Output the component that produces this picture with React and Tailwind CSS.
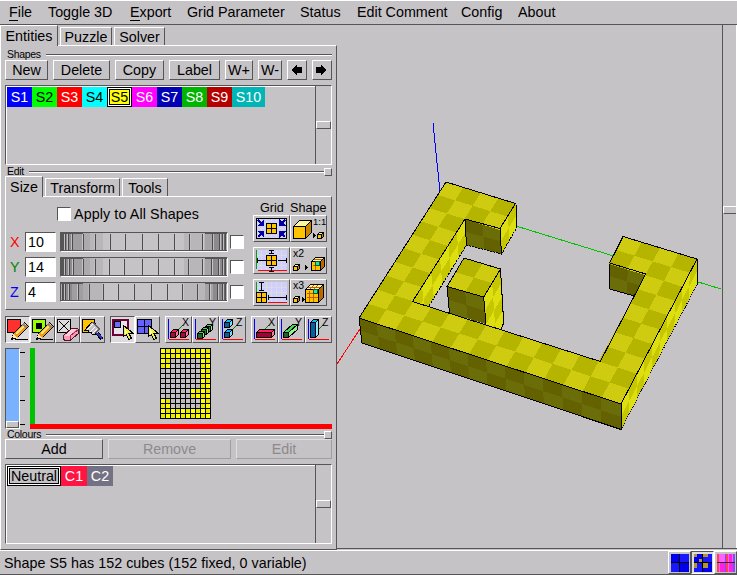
import React from "react";

const UP = "border border-t-white border-l-white border-b-[#555] border-r-[#555] bg-[#c6c3c6]";
const DOWN = "border border-t-[#555] border-l-[#555] border-b-white border-r-white";

function Btn({ w, off, children }) {
  return (
    <button
      className={`flex h-5 shrink-0 items-center justify-center border bg-[#c6c3c6] ${
        off
          ? "border-t-[#e0dfe0] border-l-[#e0dfe0] border-b-[#a09ea0] border-r-[#a09ea0] text-[#8c8a8c]"
          : "border-t-white border-l-white border-b-[#555] border-r-[#555]"
      }`}
      style={{ width: w }}
    >
      {children}
    </button>
  );
}

function Tab({ w, active, children }) {
  return (
    <div
      className={`shrink-0 border-t border-l border-r border-t-white border-l-white border-r-[#555] bg-[#c6c3c6] flex items-center justify-center ${
        active ? "relative h-[21px]" : "h-[18px] mb-px"
      }`}
      style={{ width: w }}
    >
      {children}
    </div>
  );
}

function GroupLabel({ text, knob }) {
  return (
    <div className="flex h-[9px] items-center pl-[2px] text-[10.5px] tracking-[-0.3px]">
      <span className="leading-[9px]">{text}</span>
      <div className="ml-[5px] h-[2px] grow border-t border-b border-t-[#555] border-b-white" />
      {knob && <div className={`size-2 ${UP}`} />}
    </div>
  );
}

function ListBox({ children }) {
  return (
    <div className={`flex h-20 ${DOWN}`}>
      <div className="flex grow items-start border-t border-l border-white text-white">{children}</div>
      <div className="flex w-4 items-center border-l border-[#555]">
        <div className={`h-2 w-[15px] ${UP}`} />
      </div>
    </div>
  );
}

function Chip({ w, bg, fg, sel, children }) {
  return (
    <div
      className={`flex h-5 items-center justify-center ${sel ? "border border-black" : ""}`}
      style={{ width: w, background: bg, color: fg }}
    >
      {sel ? (
        <div className="flex h-full w-full border border-white">
          <div className="flex h-full w-full items-center justify-center border border-black">{children}</div>
        </div>
      ) : (
        children
      )}
    </div>
  );
}

function Check() {
  return <div className={`size-[14px] shrink-0 bg-white ${DOWN}`} />;
}

const DIAL_A = [65, 68, 72, 83, 95, 110, 125, 142, 158, 174, 189, 202, 212, 219, 222, 225];
const DIAL_B = [65, 69, 73, 83, 95, 109, 124, 142, 158, 174, 188, 202, 211, 218, 222, 225];
const DIAL_C = [62, 65, 69, 78, 89, 103, 118, 134, 151, 167, 182, 197, 209, 217, 222, 225];

function Dial({ ticks }) {
  return (
    <div className={`h-5 w-[168px] shrink-0 ${DOWN}`}>
      <svg width="166" height="18" viewBox="61 0 166 18" shapeRendering="crispEdges">
        <rect x="61" width="166" height="18" fill="#c6c3c6" />
        <rect x="61" width="42" height="18" fill="#b8b6b8" />
        <rect x="61" width="29" height="18" fill="#adaaad" />
        <rect x="61" width="22" height="18" fill="#a09ea0" />
        <rect x="61" width="11" height="18" fill="#8c8a8c" />
        <rect x="61" width="3" height="18" fill="#555" />
        <rect x="184" width="43" height="18" fill="#b8b6b8" />
        <rect x="205" width="22" height="18" fill="#a5a3a5" />
        <rect x="213" width="14" height="18" fill="#8c8a8c" />
        <rect x="224" width="3" height="18" fill="#666" />
        {ticks.map((t) => (
          <g key={t}>
            <rect x={t} y="1" width="1" height="16" fill="#4c4c4c" />
            <rect x={t < 142 ? t - 1 : t + 1} y="1" width="1" height="16" fill="#d6d4d6" opacity={t > 83 && t < 200 ? 0.3 : 0.7} />
          </g>
        ))}
        <path d="M61 .5h22M205 .5h22" stroke="#555" />
        <path d="M61 17.5h166" stroke="#555" />
      </svg>
    </div>
  );
}

function AxisRow({ name, color, value, ticks }) {
  return (
    <div className="flex h-[25px] items-start">
      <span className="w-[15px] pt-px leading-[18px]" style={{ color }}>{name}</span>
      <div className={`mr-1 h-5 w-[31px] shrink-0 bg-white pl-[2px] leading-[18px] ${DOWN}`}>{value}</div>
      <Dial ticks={ticks} />
      <div className="ml-[2px] pt-[3px]"><Check /></div>
    </div>
  );
}

/* ---- small icons ---- */
function Cube({ x, y, s, d, f = "#ffc300", t = "#fff7a0", r = "#c68600" }) {
  return (
    <g stroke="#000" strokeWidth="1">
      <path d={`M${x} ${y}l${d} ${-d}h${s}l${-d} ${d}z`} fill={t} />
      <path d={`M${x + s} ${y}l${d} ${-d}v${s}l${-d} ${d}z`} fill={r} />
      <rect x={x} y={y} width={s} height={s} fill={f} />
    </g>
  );
}

function Four({ x, y }) {
  return (
    <g>
      <rect x={x} y={y} width="10" height="10" fill="#ffc300" stroke="#000" />
      <path d={`M${x + 5} ${y}v10M${x} ${y + 5}h10`} stroke="#000" />
    </g>
  );
}

function Lattice() {
  return (
    <g>
      <rect x="3" y="3" width="31" height="20" fill="#cfcfff" />
      <path d="M8.5 3v20M13.5 3v20M18.5 3v20M23.5 3v20M28.5 3v20M3 8.5h31M3 13.5h31M3 18.5h31" stroke="#dedbde" />
    </g>
  );
}

function IconBtn({ w, h, down, children }) {
  return (
    <button className={`shrink-0 ${down ? DOWN + " bg-[#dedbde]" : UP}`} style={{ width: w, height: h }}>
      <svg className="block" width={w - 2} height={h - 2} viewBox={`1 1 ${w - 2} ${h - 2}`} fill="none" shapeRendering="crispEdges">
        {children}
      </svg>
    </button>
  );
}

const T = ({ x, y, s = 10.5, children }) => (
  <text x={x} y={y} fontSize={s} fill="#000" fontFamily="Liberation Sans, sans-serif">{children}</text>
);

function MiniGrid({ x, y, n }) {
  const s = n * 4;
  const d = n + 2;
  return (
    <g>
      <Cube x={x} y={y} s={s + 1} d={d} r="#b57100" />
      <path d={`M${x + 4} ${y + 1}v${s - 1}M${x + 1} ${y + 4}h${s - 1}M${x + 2} ${y - 2}h${s}M${x + s + 3} ${y - 1}v${s - 1}`} stroke="#c65a00" />
      {n > 2 && <path d={`M${x + 8} ${y + 1}v${s - 1}M${x + 1} ${y + 8}h${s - 1}M${x + 8} ${y}l4 -4M${x + 4} ${y}l4 -4`} stroke="#c65a00" />}
      <rect x={x + s - 4} y={y} width="4" height="4" fill="#30dfa0" stroke="#006040" />
    </g>
  );
}

function Pencil() {
  return (
    <g>
      <path d="M10 23.5h13" stroke="#000" />
      <path d="M6.5 23.5l2-6L19.5 6.5l4 4L12.5 21.5z" fill="#ef9a18" stroke="#000" />
      <path d="M6.5 23l2-5 3.5 3.5z" fill="#ffe3b0" />
      <path d="M11 18L20.5 8.5" stroke="#ffdf70" strokeWidth="1.5" />
      <path d="M18 8l4 4" stroke="#888" strokeWidth="2" />
      <path d="M6 24l1-3 2 2z" fill="#000" />
    </g>
  );
}

function Pointer() {
  return (
    <g>
      <path d="M13.5 9.500V20.500l3-2 2 5 3-1-2.500-5h4.500z" fill="#efef42" stroke="#000" />
      <path d="M15 12v6l2-2z" fill="#ffffb0" />
    </g>
  );
}

function AxisIcon({ name, children }) {
  return (
    <IconBtn w={27} h={27}>
      <path d="M14 13l4-4" stroke="#008200" />
      {children}
      <path d="M3.5 3v20" stroke="#0000ff" />
      <path d="M4 23.5h20" stroke="#ff0000" />
      <T x={17} y={10}>{name}</T>
    </IconBtn>
  );
}

/* ---- slice grid ---- */
function filled(c, r) {
  return r < 2 || r > 11 || c > 7 || (c < 2 && (r < 4 || r > 9)) || ((c === 6 || c === 7) && (r === 8 || r === 9));
}

function Slice() {
  const cells = [];
  for (let r = 0; r < 14; r++)
    for (let c = 0; c < 10; c++)
      cells.push(
        <rect key={`${c}-${r}`} x={c * 5 + 1} y={r * 5 + 1} width="4" height="4"
          fill={!filled(c, r) ? ((c + r) % 2 ? "#c6c3c6" : "#bcb9bc") : (c + r) % 2 ? "#e7e700" : "#ffff00"} />
      );
  return (
    <svg width="51" height="71" shapeRendering="crispEdges">
      <rect width="51" height="71" fill="#000" />
      {cells}
    </svg>
  );
}

/* ---- 3D view ---- */
function projector([[x0, y0], [x1, y1], [x2, y2], [x3, y3]]) {
  const dx1 = x1 - x2, dx2 = x3 - x2, dx3 = x0 - x1 + x2 - x3;
  const dy1 = y1 - y2, dy2 = y3 - y2, dy3 = y0 - y1 + y2 - y3;
  const den = dx1 * dy2 - dx2 * dy1;
  const g = (dx3 * dy2 - dx2 * dy3) / den;
  const h = (dx1 * dy3 - dx3 * dy1) / den;
  const a = x1 - x0 + g * x1, b = x3 - x0 + h * x3;
  const d = y1 - y0 + g * y1, e = y3 - y0 + h * y3;
  return (u, v) => {
    const w = g * u + h * v + 1;
    return `${((a * u + b * v + x0) / w).toFixed(2)},${((d * u + e * v + y0) / w).toFixed(2)}`;
  };
}

function Face({ q, nu, nv, even, odd, keep }) {
  const p = projector(q);
  const out = [];
  for (let i = 0; i < nu; i++)
    for (let j = 0; j < nv; j++)
      if (!keep || keep(i, j))
        out.push(
          <polygon key={`${i}-${j}`} fill={(i + j) % 2 ? odd : even}
            points={[p(i / nu, j / nv), p((i + 1) / nu, j / nv), p((i + 1) / nu, (j + 1) / nv), p(i / nu, (j + 1) / nv)].join(" ")} />
        );
  return <g>{out}</g>;
}

const TOP = { even: "#b5b500", odd: "#cecb10" };
const FRONT = { even: "#636100", odd: "#6b6d08" };
const SIDE = { even: "#dedf10", odd: "#c6c700" };

function View3D() {
  return (
    <svg width="385" height="523" viewBox="337 25 385 523" shapeRendering="crispEdges" fill="none">
      <path d="M433 123L440 192" stroke="#0000ff" />
      <path d="M516 226L721 289" stroke="#00c300" />
      <path d="M360 329L337 364" stroke="#ff0000" />
      <Face q={[[465, 219], [412.5, 301.5], [416, 327], [466.5, 245]]} nu={6} nv={2} {...SIDE} />
      <Face q={[[465, 219], [500, 228.5], [501.5, 254], [466.5, 245]]} nu={2} nv={2} {...FRONT} />
      <Face q={[[500, 228.5], [515.5, 203.5], [516.5, 228], [501.5, 254]]} nu={2} nv={2} {...SIDE} />
      <Face q={[[609.7, 263], [645.7, 274], [645, 300], [609.7, 289]]} nu={2} nv={2} {...FRONT} />
      <path d="M609.7 289L636 296.5M609.7 263V289" stroke="#000" />
      <path d="M466.5 245L501.5 254L516.5 228M466.5 245L429 306" stroke="#000" strokeDasharray="2 1" />
      <path d="M465 219L466.5 245M500 228.5L501.5 254M516 204L516.5 228" stroke="#000" />
      <Face q={[[447, 286.5], [483.7, 297], [486, 324], [449.5, 313]]} nu={2} nv={2} {...FRONT} />
      <Face q={[[483.7, 297], [500.5, 269], [503.7, 323], [488, 350]]} nu={2} nv={4} {...SIDE} />
      <Face q={[[447, 286.5], [483.7, 297], [500.5, 269], [464, 258]]} nu={2} nv={2} even="#cecb10" odd="#b5b500" />
      <path d="M447 286.5L483.7 297L500.5 269L464 258ZM447 286.5L449.5 313M483.7 297L486 324M500.5 269L503.7 323L500 331" stroke="#000" />
      <Face q={[[359, 318], [621, 404], [697, 259], [446, 182]]} nu={14} nv={10} {...TOP}
        keep={(u, v) => v < 2 || u < 2 || u > 11 || (v > 7 && (u < 4 || u > 9))} />
      <Face q={[[359, 318], [621, 404], [621, 429.5], [362, 343]]} nu={14} nv={2} {...FRONT} />
      <Face q={[[621, 404], [697, 259], [696.5, 284.5], [621, 429.5]]} nu={10} nv={2} {...SIDE} />
      <path stroke="#000" d="M359 318L621 404L697 259L623 236.5L609.7 263L645.7 274L600.3 361.5L412.5 301.5L465 219L500 228.5L515.5 203.5L446 182ZM359 318L362 343L621 429.5V404M697 259V284.5" />
      <path stroke="#000" strokeDasharray="1 1" d="M621 429.5L697 284.5" />
    </svg>
  );
}

function StatusIcon({ kind }) {
  return (
    <svg className="block" width="18" height="18" shapeRendering="crispEdges">
      {kind === 2 ? (
        <g>
          <rect width="18" height="18" fill="#ff61ff" />
          <path d="M0 0h2v18H0zM9 0h2v18H9z" fill="#ff4050" />
          <path d="M3 9h5v9H3zM12 9h4v9h-4zM12 0h3v9h-3z" fill="#ff20e0" />
          <path d="M8 0h1v18H8zM16 0h2v18h-2z" fill="#7050ff" />
          <path d="M0 8h18v1H0z" fill="#402040" />
        </g>
      ) : (
        <g>
          <rect width="18" height="18" fill="#0000ef" />
          <path d="M9 0h9v9H9zM0 9h9v9H0z" fill="#1818ff" />
          {kind === 1 && <path d="M0 0h3v3H0zM9 0h5v3H9zM0 9h3v5H0zM9 9h5v5H9zM5 5h3v3H5z" fill="#b59239" />}
          <path d="M8 0h1v18H8zM0 8h18v1H0z" fill="#000" />
        </g>
      )}
    </svg>
  );
}

const SHAPES = [
  ["S1", "#0000ff", "#fff", 25], ["S2", "#00ff00", "#000", 25], ["S3", "#ff0000", "#fff", 25],
  ["S4", "#00ffff", "#000", 25], ["S5", "#ffff00", "#000", 25], ["S6", "#ff00ff", "#fff", 25],
  ["S7", "#0000b5", "#fff", 25], ["S8", "#00b500", "#fff", 25], ["S9", "#b50000", "#fff", 25],
  ["S10", "#00b5b5", "#fff", 33],
];

const MENU = [["File", 39, 1], ["Toggle 3D", 82], ["Export", 57, 1], ["Grid Parameter", 113],
  ["Status", 57], ["Edit Comment", 104], ["Config", 57], ["About", 60]];

export default function App() {
  return (
    <div className="flex h-[575px] w-[737px] flex-col overflow-hidden bg-[#c6c3c6] font-['Liberation_Sans',Arial,sans-serif] text-[14.3px] leading-[18px] text-black whitespace-nowrap">
      <nav className="flex h-[25px] shrink-0 items-center border-t border-b border-t-white border-b-[#555] pl-[9px]">
        {MENU.map(([t, w, u]) => (
          <span key={t} className="-mt-px" style={{ width: w }}>
            {u ? <><span className="border-b border-black inline-block leading-[15px]">{t[0]}</span>{t.slice(1)}</> : t}
          </span>
        ))}
      </nav>

      <div className="flex h-[525px] shrink-0">
        <section className="flex w-[337px] shrink-0 flex-col">
          <div className="z-10 -mb-px flex h-[21px] items-end gap-[2px]">
            <Tab w={58} active>Entities</Tab>
            <Tab w={52}>Puzzle</Tab>
            <Tab w={51}>Solver</Tab>
          </div>
          <div className="flex h-[505px] flex-col border-t border-l border-r border-b border-t-white border-l-white border-r-[#555] border-b-[#555] pt-[4px] pr-1 pl-1">
            <GroupLabel text="Shapes" />
            <div className="mt-px flex gap-[5px]">
              <Btn w={43}>New</Btn>
              <Btn w={57}>Delete</Btn>
              <Btn w={49}>Copy</Btn>
              <Btn w={51}>Label</Btn>
              <Btn w={28}>W+</Btn>
              <Btn w={24}>W-</Btn>
              <Btn w={20}>
                <svg width="12" height="10" shapeRendering="crispEdges"><path d="M0 5L6 0V2H11V8H6V10z" /></svg>
              </Btn>
              <Btn w={20}>
                <svg width="12" height="10" shapeRendering="crispEdges"><path d="M11 5L5 0V2H0V8H5V10z" /></svg>
              </Btn>
            </div>
            <div className="mt-[5px]">
              <ListBox>
                {SHAPES.map(([t, bg, fg, w]) => <Chip key={t} w={w} bg={bg} fg={fg} sel={t === "S5"}>{t}</Chip>)}
              </ListBox>
            </div>

            <div className="mt-[2px]"><GroupLabel text="Edit" knob /></div>
            <div className="z-10 -mb-px flex h-[21px] items-end gap-[2px]">
              <Tab w={38} active>Size</Tab>
              <Tab w={75}>Transform</Tab>
              <Tab w={46}>Tools</Tab>
            </div>
            <div className="flex h-[114px] shrink-0 border-t border-l border-r border-b border-t-white border-l-white border-r-[#555] border-b-[#555]">
              <div className="w-[247px] shrink-0 pt-[10px] pl-[4px]">
                <div className="mb-[11px] ml-[47px] flex h-[14px] items-center gap-[3px] tracking-[0.1px]"><Check />Apply to All Shapes</div>
                <AxisRow name="X" color="#ff0000" value="10" ticks={DIAL_A} />
                <AxisRow name="Y" color="#008200" value="14" ticks={DIAL_B} />
                <AxisRow name="Z" color="#0000ff" value="4" ticks={DIAL_C} />
              </div>
              <div className="flex flex-col pt-[2px]">
                <div className="flex h-4 pt-px text-[12.6px] leading-4"><span className="w-[37px] pl-[7px]">Grid</span><span>Shape</span></div>
                <div className="flex flex-col gap-[5px]">
                  <div className="flex">
                    <IconBtn w={37} h={27}>
                      <Lattice />
                      <rect x="3.5" y="3.5" width="30" height="20" stroke="#000" />
                      <path d="M5 5l4 4M32 5l-4 4M5 22l4-4M32 22l-4-4" stroke="#0000a5" strokeWidth="2.5" />
                      <path d="M11 4v7H4zM26 4v7h7zM11 23v-7H4zM26 23v-7h7z" fill="#0000a5" />
                      <Four x={13.5} y={8.5} />
                    </IconBtn>
                    <IconBtn w={37} h={27}>
                      <Cube x={3.5} y={11.5} s={12} d={6} />
                      <T x={23} y={10} s={9.5}>1:1</T>
                      <path d="M23 18l3 2.5-3 2.5z" fill="#000" />
                      <Cube x={27.5} y={19.5} s={4} d={2} />
                    </IconBtn>
                  </div>
                  <div className="flex">
                    <IconBtn w={37} h={27}>
                      <Lattice />
                      <path d="M3.5 3v19" stroke="#00a200" /><path d="M5 23.5h29" stroke="#f00" />
                      <path d="M18.5 3v4M16 3.5h5M16 6.5h5M18.5 20v4M16 20.5h5M16 24.5h5M4 13.5h9M4.5 11v5M25 13.5h9M33.5 11v5" stroke="#000" />
                      <Four x={13.5} y={8.5} />
                    </IconBtn>
                    <IconBtn w={37} h={27}>
                      <T x={3} y={10}>x2</T>
                      <Cube x={3.5} y={19.5} s={4} d={2} />
                      <path d="M15 18l3 2.5-3 2.5z" fill="#000" />
                      <MiniGrid x={21.5} y={14.5} n={2} />
                    </IconBtn>
                  </div>
                  <div className="flex">
                    <IconBtn w={37} h={27}>
                      <Lattice />
                      <path d="M3.5 3v10" stroke="#00a200" /><path d="M15 23.5h19" stroke="#f00" />
                      <path d="M8.5 3v9M6 3.5h5M6 11.5h5M15 18.5h19M15.5 16v5M33.5 16v5" stroke="#000" />
                      <Four x={3.5} y={13.5} />
                    </IconBtn>
                    <IconBtn w={37} h={27}>
                      <T x={3} y={10}>x3</T>
                      <Cube x={3.5} y={19.5} s={4} d={2} />
                      <path d="M12 18l3 2.5-3 2.5z" fill="#000" />
                      <MiniGrid x={15.5} y={10.5} n={3} />
                    </IconBtn>
                  </div>
                </div>
              </div>
            </div>

            <div className="mt-[6px] flex">
              <IconBtn w={25} h={27} down>
                <rect x="2.5" y="3.5" width="13" height="13" fill="#ff3030" stroke="#000" /><Pencil />
              </IconBtn>
              <IconBtn w={25} h={27}>
                <rect x="2.5" y="3.5" width="13" height="13" fill="#9cff00" stroke="#000" />
                <rect x="6" y="7" width="6" height="6" fill="#000" /><Pencil />
              </IconBtn>
              <IconBtn w={25} h={27}>
                <rect x="2.5" y="3.5" width="13" height="13" fill="#dedbde" stroke="#000" />
                <path d="M4 5l10 10M14 5L4 15" stroke="#000" />
                <path d="M8.5 19.5l8-7h6l1 1v4l-8 6.5h-6l-1-1z" fill="#ff9ab5" stroke="#4a1828" />
                <path d="M9 20l8-7h5l-7 6.5z" fill="#ffcbd6" /><path d="M15 23v-3l8-6" stroke="#943052" />
              </IconBtn>
              <IconBtn w={25} h={27}>
                <rect x="2.5" y="3.5" width="12" height="13" fill="#ffc300" stroke="#000" />
                <path d="M5 14l7-8h2l5 7-4 6-3-1-1-2-2 0-1-2z" fill="#c6c3c6" stroke="#000" />
                <path d="M7 14l6-6M10 16l5-5M12 18l5-5" stroke="#fff" /><path d="M13 6l6 7-3 4" stroke="#636163" strokeWidth="1.5" />
                <path d="M17 17l5 6" stroke="#000" strokeWidth="3.5" /><path d="M17 17l5 5.5" stroke="#3030c6" strokeWidth="2" />
              </IconBtn>
              <div className="w-[5px]" />
              <IconBtn w={25} h={27} down>
                <rect x="3" y="4" width="15" height="15" fill="#e7e3e7" stroke="#6b0039" strokeWidth="2" />
                <rect x="4.5" y="5.5" width="6" height="6" fill="#6b6bff" stroke="#000" /><Pointer />
              </IconBtn>
              <IconBtn w={25} h={27}>
                <rect x="2.5" y="3.5" width="14" height="14" fill="#6361ff" stroke="#000" />
                <path d="M9.5 3v15M2 10.5h15" stroke="#000" /><Pointer />
              </IconBtn>
              <div className="w-[5px]" />
              <AxisIcon name="X">
                <Cube x={5.5} y={16.5} s={5} d={3} f="#b50039" t="#ff2060" r="#ff71a0" />
                <Cube x={15.5} y={16.5} s={5} d={3} f="#b50039" t="#ff2060" r="#ff71a0" />
              </AxisIcon>
              <AxisIcon name="Y">
                <Cube x={13.5} y={10.5} s={5} d={2} f="#20802a" t="#40df50" r="#90ef90" />
                <Cube x={9.5} y={13.5} s={5} d={2} f="#20802a" t="#40df50" r="#90ef90" />
                <Cube x={5.5} y={17.5} s={5} d={2} f="#20602a" t="#40df50" r="#90ef90" />
              </AxisIcon>
              <AxisIcon name="Z">
                <Cube x={5.5} y={6.5} s={5} d={3} f="#0061a5" t="#00c3ff" r="#70dfff" />
                <Cube x={5.5} y={16.5} s={5} d={3} f="#0061a5" t="#00c3ff" r="#70dfff" />
              </AxisIcon>
              <div className="w-[5px]" />
              <AxisIcon name="X">
                <path d="M5.5 16.5l3-3h15l-3 3z" fill="#ff2060" stroke="#000" />
                <path d="M20.5 16.5l3-3v5l-3 3z" fill="#ff71a0" stroke="#000" />
                <path d="M5.5 16.5h15v5h-15z" fill="#a50031" stroke="#000" />
              </AxisIcon>
              <AxisIcon name="Y">
                <path d="M5.5 16.5l9-8h5l-9 8z" fill="#40df50" stroke="#000" />
                <path d="M10.5 16.5l9-8v5l-9 8z" fill="#90ef90" stroke="#000" />
                <path d="M5.5 16.5h5v5h-5z" fill="#20602a" stroke="#000" />
              </AxisIcon>
              <AxisIcon name="Z">
                <path d="M5.5 6.5l3-3h5l-3 3z" fill="#00c3ff" stroke="#000" />
                <path d="M10.5 6.5l3-3v15l-3 3z" fill="#90e7ff" stroke="#000" />
                <path d="M5.5 6.5h5v15h-5z" fill="#0061a5" stroke="#000" />
              </AxisIcon>
            </div>

            <div className="mt-[5px] flex h-[81px]">
              <div className={`flex h-[81px] w-[15px] flex-col justify-end bg-[#7bb2ff] ${DOWN}`}>
                <div className={`h-[7px] ${UP}`} />
              </div>
              <div className="flex h-[77px] w-[5px] flex-col justify-between pt-[4px]">
                <i className="block h-px bg-black" /><i className="block h-px bg-black" />
                <i className="block h-px bg-black" /><i className="block h-px bg-black" />
              </div>
              <div className="ml-[5px] flex grow flex-col">
                <div className="flex h-[76px] justify-start">
                  <div className="w-[5px] bg-[#00c300]" />
                  <div className="ml-[125px]"><Slice /></div>
                </div>
                <div className="h-[5px] bg-[#ff0000]" />
              </div>
            </div>

            <div className="mt-px"><GroupLabel text="Colours" knob /></div>
            <div className="flex gap-[5px]">
              <Btn w={98}>Add</Btn>
              <Btn w={123} off>Remove</Btn>
              <Btn w={96} off>Edit</Btn>
            </div>
            <div className="mt-[5px]">
              <ListBox>
                <Chip w={54} bg="#c6c3c6" fg="#000" sel>Neutral</Chip>
                <Chip w={26} bg="#ff1442" fg="#fff">C1</Chip>
                <Chip w={26} bg="#737184" fg="#fff">C2</Chip>
              </ListBox>
            </div>
          </div>
        </section>

        <section className="flex h-[524px] grow border-b border-[#555]">
          <View3D />
          <div className="flex w-[14px] flex-col border-l border-[#555] pt-[181px]">
            <div className={`h-2 w-[14px] ${UP}`} />
          </div>
          <div className="w-px bg-white" />
        </section>
      </div>

      <footer className="flex h-[25px] shrink-0 border-t border-b border-t-white border-b-[#555]">
        <div className="flex grow items-center pl-1 tracking-[0.03px]">Shape S5 has 152 cubes (152 fixed, 0 variable)</div>
        <div className={`flex w-[23px] items-center justify-center ${UP}`}><StatusIcon kind={0} /></div>
        <div className={`flex w-[23px] items-center justify-center bg-[#dedbde] ${DOWN}`}><StatusIcon kind={1} /></div>
        <div className={`flex w-[23px] items-center justify-center ${UP}`}><StatusIcon kind={2} /></div>
      </footer>
    </div>
  );
}
